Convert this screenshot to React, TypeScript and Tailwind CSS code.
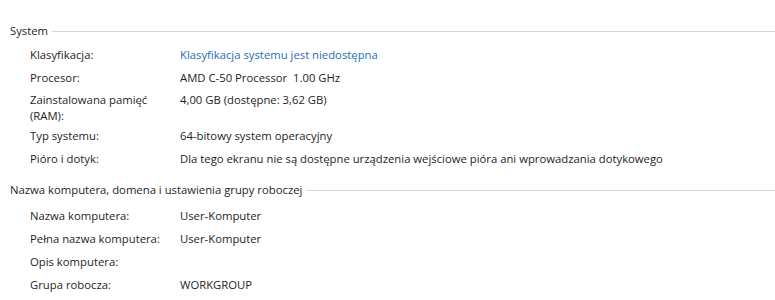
const font = { fontFamily: '"Open Sans", "Noto Sans", sans-serif' };

type Row = { label: string[]; value?: string; link?: boolean };

const systemRows: Row[] = [
  { label: ["Klasyfikacja:"], value: "Klasyfikacja systemu jest niedostępna", link: true },
  { label: ["Procesor:"], value: "AMD C-50 Processor\u00a0\u00a01.00 GHz" },
  { label: ["Zainstalowana pamięć", "(RAM):"], value: "4,00 GB (dostępne: 3,62 GB)" },
  { label: ["Typ systemu:"], value: "64-bitowy system operacyjny" },
  {
    label: ["Pióro i dotyk:"],
    value: "Dla tego ekranu nie są dostępne urządzenia wejściowe pióra ani wprowadzania dotykowego",
  },
];

const computerRows: Row[] = [
  { label: ["Nazwa komputera:"], value: "User-Komputer" },
  { label: ["Pełna nazwa komputera:"], value: "User-Komputer" },
  { label: ["Opis komputera:"] },
  { label: ["Grupa robocza:"], value: "WORKGROUP" },
];

function Section({ title, rows, wide }: { title: string; rows: Row[]; wide?: boolean }) {
  return (
    <div>
      <div className="flex items-center gap-1 pl-[10px] h-[20px]">
        <span className="text-[#1e1e1e]">{title}</span>
        <div className="flex-1 h-px bg-[#d5d5d5] mt-[1px]" />
      </div>
      <div
        className={`flex flex-col pl-[30px] ${wide ? "gap-[7px] pt-[8px]" : "gap-[6.5px] pt-[6px]"}`}
      >
        {rows.map((r, i) => (
          <div key={i} className={`flex ${r.label.length > 1 ? "mb-[-2.5px]" : ""}`}>
            <div className="w-[150px] text-[#1e1e1e] leading-[16px]">
              {r.label.map((l, j) => (
                <div key={j}>{l}</div>
              ))}
            </div>
            <div
              className={`leading-[16px] ${r.link ? "text-[#1e6fb3]" : "text-[#1e1e1e]"}`}
            >
              {r.value}
            </div>
          </div>
        ))}
      </div>
    </div>
  );
}

export default function App() {
  return (
    <div className="w-[775px] h-[300px] bg-white text-[11.3px] overflow-hidden pt-[21px]" style={font}>
      <Section title="System" rows={systemRows} />
      <div className="h-[13.5px]" />
      <Section title="Nazwa komputera, domena i ustawienia grupy roboczej" rows={computerRows} wide />
    </div>
  );
}
